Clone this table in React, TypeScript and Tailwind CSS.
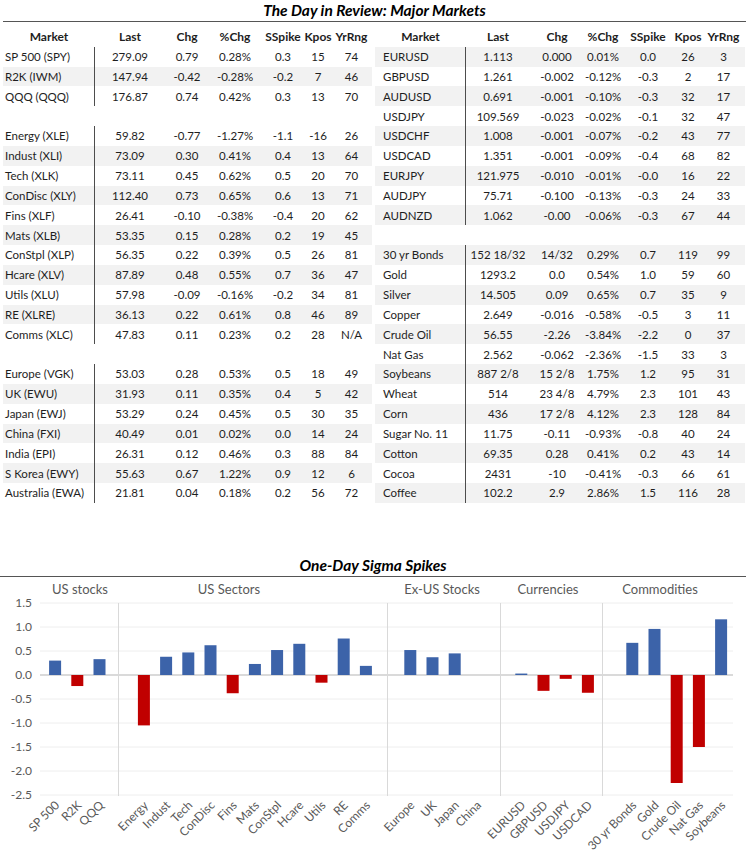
import React from "react";

type Row = string[] | null;

const leftRows: Row[] = [
  ["SP 500 (SPY)", "279.09", "0.79", "0.28%", "0.3", "15", "74"],
  ["R2K (IWM)", "147.94", "-0.42", "-0.28%", "-0.2", "7", "46"],
  ["QQQ (QQQ)", "176.87", "0.74", "0.42%", "0.3", "13", "70"],
  null,
  ["Energy (XLE)", "59.82", "-0.77", "-1.27%", "-1.1", "-16", "26"],
  ["Indust (XLI)", "73.09", "0.30", "0.41%", "0.4", "13", "64"],
  ["Tech (XLK)", "73.11", "0.45", "0.62%", "0.5", "20", "70"],
  ["ConDisc (XLY)", "112.40", "0.73", "0.65%", "0.6", "13", "71"],
  ["Fins (XLF)", "26.41", "-0.10", "-0.38%", "-0.4", "20", "62"],
  ["Mats (XLB)", "53.35", "0.15", "0.28%", "0.2", "19", "45"],
  ["ConStpl (XLP)", "56.35", "0.22", "0.39%", "0.5", "26", "81"],
  ["Hcare (XLV)", "87.89", "0.48", "0.55%", "0.7", "36", "47"],
  ["Utils (XLU)", "57.98", "-0.09", "-0.16%", "-0.2", "34", "81"],
  ["RE (XLRE)", "36.13", "0.22", "0.61%", "0.8", "46", "89"],
  ["Comms (XLC)", "47.83", "0.11", "0.23%", "0.2", "28", "N/A"],
  null,
  ["Europe (VGK)", "53.03", "0.28", "0.53%", "0.5", "18", "49"],
  ["UK (EWU)", "31.93", "0.11", "0.35%", "0.4", "5", "42"],
  ["Japan (EWJ)", "53.29", "0.24", "0.45%", "0.5", "30", "35"],
  ["China (FXI)", "40.49", "0.01", "0.02%", "0.0", "14", "24"],
  ["India (EPI)", "26.31", "0.12", "0.46%", "0.3", "88", "84"],
  ["S Korea (EWY)", "55.63", "0.67", "1.22%", "0.9", "12", "6"],
  ["Australia (EWA)", "21.81", "0.04", "0.18%", "0.2", "56", "72"],
];

const rightRows: Row[] = [
  ["EURUSD", "1.113", "0.000", "0.01%", "0.0", "26", "3"],
  ["GBPUSD", "1.261", "-0.002", "-0.12%", "-0.3", "2", "17"],
  ["AUDUSD", "0.691", "-0.001", "-0.10%", "-0.3", "32", "17"],
  ["USDJPY", "109.569", "-0.023", "-0.02%", "-0.1", "32", "47"],
  ["USDCHF", "1.008", "-0.001", "-0.07%", "-0.2", "43", "77"],
  ["USDCAD", "1.351", "-0.001", "-0.09%", "-0.4", "68", "82"],
  ["EURJPY", "121.975", "-0.010", "-0.01%", "-0.0", "16", "22"],
  ["AUDJPY", "75.71", "-0.100", "-0.13%", "-0.3", "24", "33"],
  ["AUDNZD", "1.062", "-0.00", "-0.06%", "-0.3", "67", "44"],
  null,
  ["30 yr Bonds", "152 18/32", "14/32", "0.29%", "0.7", "119", "99"],
  ["Gold", "1293.2", "0.0", "0.54%", "1.0", "59", "60"],
  ["Silver", "14.505", "0.09", "0.65%", "0.7", "35", "9"],
  ["Copper", "2.649", "-0.016", "-0.58%", "-0.5", "3", "11"],
  ["Crude Oil", "56.55", "-2.26", "-3.84%", "-2.2", "0", "37"],
  ["Nat Gas", "2.562", "-0.062", "-2.36%", "-1.5", "33", "3"],
  ["Soybeans", "887 2/8", "15 2/8", "1.75%", "1.2", "95", "31"],
  ["Wheat", "514", "23 4/8", "4.79%", "2.3", "101", "43"],
  ["Corn", "436", "17 2/8", "4.12%", "2.3", "128", "84"],
  ["Sugar No. 11", "11.75", "-0.11", "-0.93%", "-0.8", "40", "24"],
  ["Cotton", "69.35", "0.28", "0.41%", "0.2", "43", "14"],
  ["Cocoa", "2431", "-10", "-0.41%", "-0.3", "66", "61"],
  ["Coffee", "102.2", "2.9", "2.86%", "1.5", "116", "28"],
];

const headers = ["Market", "Last", "Chg", "%Chg", "SSpike", "Kpos", "YrRng"];

const leftW = ["w-[92px]", "w-[70px]", "w-[44px]", "w-[52px]", "w-[44px]", "w-[26px]", "w-[41px]"];
const rightW = ["w-[91px]", "w-[64px]", "w-[54px]", "w-[38px]", "w-[52px]", "w-[28px]", "w-[43px]"];

function Table({ rows, widths, grayOdd, pad }: { rows: Row[]; widths: string[]; grayOdd: boolean; pad: string }) {
  return (
    <div className="flex flex-col">
      <div className="flex h-[19.83px] items-center text-[12px] font-bold">
        {headers.map((h, i) => (
          <div key={h} className={`${widths[i]} flex shrink-0 justify-center whitespace-nowrap`}>
            {h}
          </div>
        ))}
      </div>
      {rows.map((r, idx) => {
        const n = idx + 1;
        const gray = r !== null && (grayOdd ? n % 2 === 1 : n % 2 === 0);
        if (!r) return <div key={idx} className="h-[19.83px]" />;
        return (
          <div key={idx} className={`flex h-[19.83px] items-center ${gray ? "bg-[#f2f2f2]" : ""}`}>
            {r.map((c, i) =>
              i === 0 ? (
                <div
                  key={i}
                  className={`${widths[0]} ${pad} flex h-full shrink-0 items-center whitespace-nowrap border-r border-[#4d4d4d]`}
                >
                  {c}
                </div>
              ) : (
                <div key={i} className={`${widths[i]} flex shrink-0 justify-center whitespace-nowrap`}>
                  {c}
                </div>
              )
            )}
          </div>
        );
      })}
    </div>
  );
}

const cats: { name: string; v: number | null }[] = [
  { name: "SP 500", v: 0.3 },
  { name: "R2K", v: -0.23 },
  { name: "QQQ", v: 0.33 },
  { name: "", v: null },
  { name: "Energy", v: -1.05 },
  { name: "Indust", v: 0.38 },
  { name: "Tech", v: 0.47 },
  { name: "ConDisc", v: 0.62 },
  { name: "Fins", v: -0.38 },
  { name: "Mats", v: 0.23 },
  { name: "ConStpl", v: 0.52 },
  { name: "Hcare", v: 0.65 },
  { name: "Utils", v: -0.16 },
  { name: "RE", v: 0.76 },
  { name: "Comms", v: 0.19 },
  { name: "", v: null },
  { name: "Europe", v: 0.52 },
  { name: "UK", v: 0.37 },
  { name: "Japan", v: 0.45 },
  { name: "China", v: 0.0 },
  { name: "", v: null },
  { name: "EURUSD", v: 0.03 },
  { name: "GBPUSD", v: -0.33 },
  { name: "USDJPY", v: -0.08 },
  { name: "USDCAD", v: -0.37 },
  { name: "", v: null },
  { name: "30 yr Bonds", v: 0.67 },
  { name: "Gold", v: 0.96 },
  { name: "Crude Oil", v: -2.25 },
  { name: "Nat Gas", v: -1.5 },
  { name: "Soybeans", v: 1.16 },
];

function Chart() {
  const zero = 98;
  const scale = 48;
  const x0 = 44;
  const step = 22.2;
  const ticks = [1.5, 1.0, 0.5, 0.0, -0.5, -1.0, -1.5, -2.0, -2.5];
  const seps = [118, 387, 500, 602];
  const groups = [
    { name: "US stocks", x: 80 },
    { name: "US Sectors", x: 229 },
    { name: "Ex-US Stocks", x: 442 },
    { name: "Currencies", x: 548 },
    { name: "Commodities", x: 660 },
  ];
  return (
    <svg width="749" height="275" viewBox="0 0 749 275" style={{ fontFamily: "Lato, 'Open Sans', sans-serif" }}>
      {ticks.map((t) => {
        const y = zero - t * scale;
        return (
          <g key={t}>
            <line x1={40} x2={733} y1={y} y2={y} stroke={t === 0 ? "#b5b5b5" : "#eeeeee"} strokeWidth={1} />
            <text x={32} y={y + 4} textAnchor="end" fontSize={12} fill="#595959">
              {t.toFixed(1)}
            </text>
          </g>
        );
      })}
      {seps.map((s) => (
        <line key={s} x1={s + 0.5} x2={s + 0.5} y1={26} y2={219} stroke="#d9d9d9" strokeWidth={1} />
      ))}
      {groups.map((g) => (
        <text key={g.name} x={g.x} y={17} textAnchor="middle" fontSize={13} fill="#595959">
          {g.name}
        </text>
      ))}
      {cats.map((c, i) => {
        const cx = x0 + step * (i + 0.5);
        if (c.v === null) return null;
        const h = Math.abs(c.v) * scale;
        const y = c.v >= 0 ? zero - h : zero;
        return (
          <g key={i}>
            {h > 0 && (
              <rect x={cx - 6} y={y} width={12} height={h} fill={c.v >= 0 ? "#3c63a9" : "#c00000"} />
            )}
            <text
              x={cx + 5}
              y={229}
              textAnchor="end"
              fontSize={12}
              fill="#595959"
              transform={`rotate(-45 ${cx + 5} 229)`}
            >
              {c.name}
            </text>
          </g>
        );
      })}
    </svg>
  );
}

export default function App() {
  return (
    <div
      className="w-[749px] h-[852px] overflow-hidden bg-white text-[11.5px] text-[#1e1e1e]"
      style={{ fontFamily: "Lato, 'Open Sans', sans-serif" }}
    >
      <div className="mx-[3px] flex h-[22px] items-center justify-center border-b border-[#555555] text-[15.5px] font-bold italic text-black">
        The Day in Review: Major Markets
      </div>
      <div className="flex gap-[3px] pl-[3px] pt-[5px]">
        <Table rows={leftRows} widths={leftW} grayOdd={false} pad="pl-[2px]" />
        <Table rows={rightRows} widths={rightW} grayOdd={true} pad="pl-[8px]" />
      </div>
      <div className="mt-[52px] mr-[3px] flex h-[22px] items-center justify-center border-b border-[#555555] text-[15.5px] font-bold italic text-black">
        One-Day Sigma Spikes
      </div>
      <Chart />
    </div>
  );
}
